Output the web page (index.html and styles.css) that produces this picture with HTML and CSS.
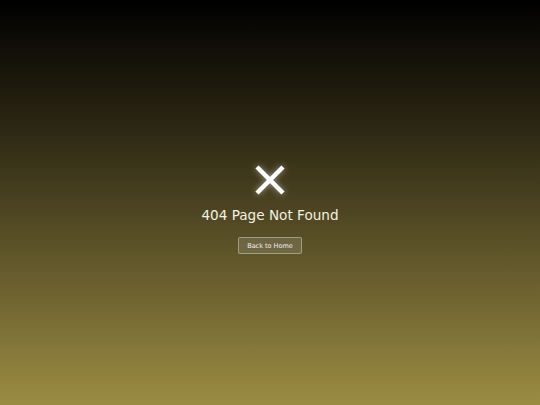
FILE: index.html
```html
<!DOCTYPE html>
<html>
<head>
<meta charset="utf-8">
<link rel="stylesheet" href="styles.css">
</head>
<body>
<main class="page">
  <div class="box">
    <svg class="icon" width="34" height="34" viewBox="0 0 34 34">
      <path d="M4 4 L30 30 M30 4 L4 30" stroke="#fff" stroke-width="4.5" stroke-linecap="butt" fill="none"/>
    </svg>
    <h1 class="title">404 Page Not Found</h1>
    <a class="btn" href="#">Back to Home</a>
  </div>
</main>
</body>
</html>
```
FILE: styles.css
```css
html, body {
  margin: 0;
  padding: 0;
}
body {
  width: 540px;
  height: 405px;
  overflow: hidden;
  background: linear-gradient(to bottom, #000000 0%, #2a2512 30%, #5a5128 60%, #9b8c42 100%);
  font-family: "DejaVu Sans", sans-serif;
  color: #fff;
}
.page {
  height: 405px;
  display: flex;
  align-items: flex-start;
  justify-content: center;
}
.box {
  display: flex;
  flex-direction: column;
  align-items: center;
  padding-top: 163px;
}
.icon {
  display: block;
  filter: drop-shadow(0 0 3px rgba(255,255,255,0.5));
}
.title {
  margin: 10px 0 0 0;
  font-size: 13.6px;
  font-weight: normal;
  line-height: 17px;
  color: #f4f0e0;
}
.btn {
  margin-top: 13px;
  width: 64px;
  height: 17px;
  box-sizing: border-box;
  display: flex;
  align-items: center;
  justify-content: center;
  font-size: 6.5px;
  color: #eee;
  text-decoration: none;
  background: rgba(255,255,255,0.12);
  border: 1px solid rgba(255,255,255,0.35);
  border-radius: 2px;
}
```
